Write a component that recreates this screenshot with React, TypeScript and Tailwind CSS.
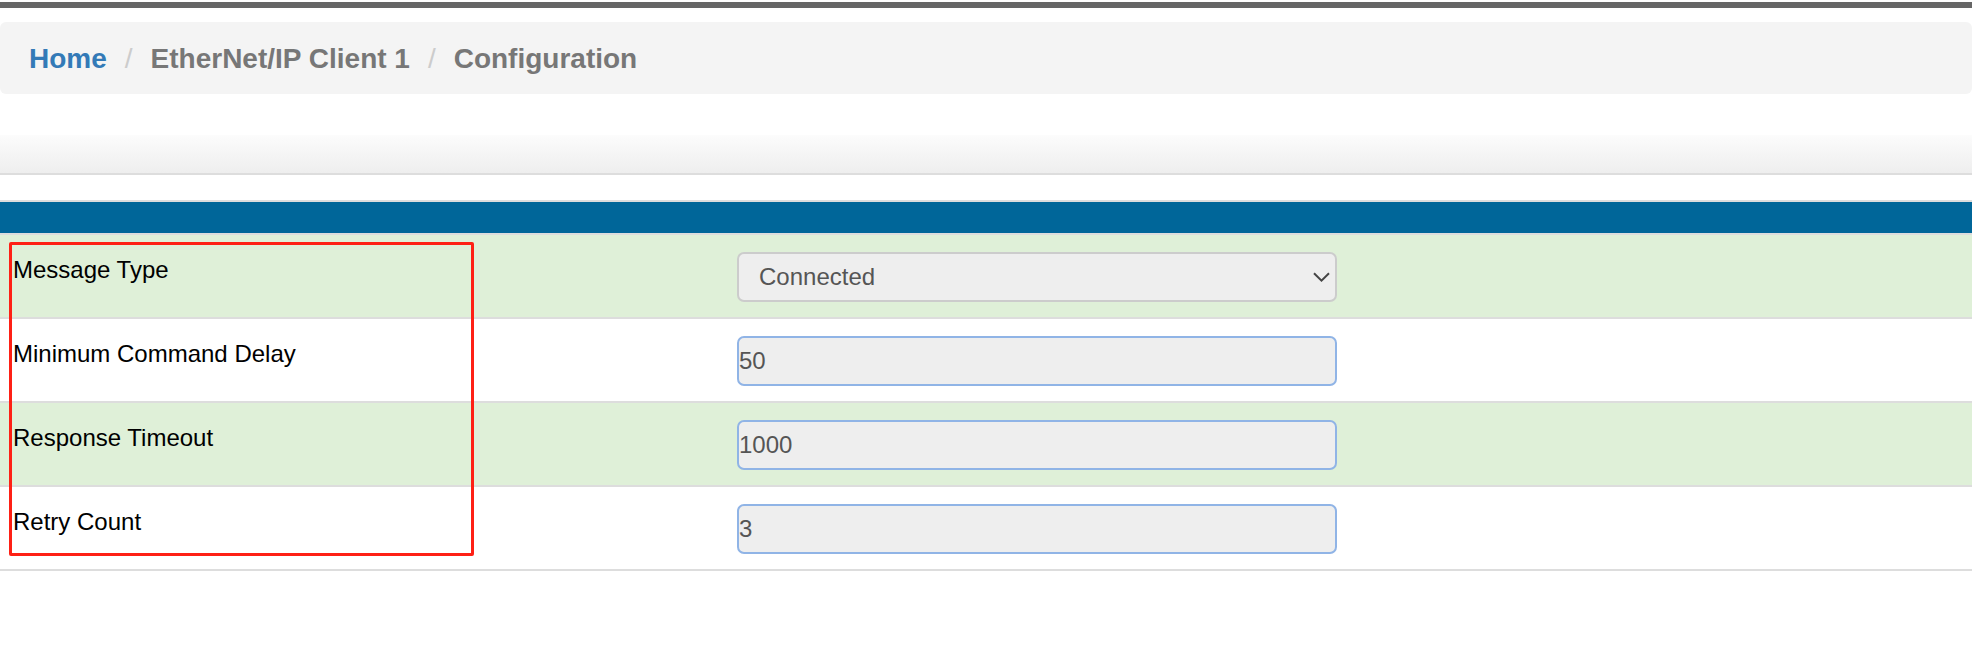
const crumbs = ["EtherNet/IP Client 1", "Configuration"];

const rows = [
  { label: "Message Type", value: "Connected", select: true },
  { label: "Minimum Command Delay", value: "50" },
  { label: "Response Timeout", value: "1000" },
  { label: "Retry Count", value: "3" },
];

function ChevronDown() {
  return (
    <svg width="17" height="10" viewBox="0 0 17 10" fill="none" className="pointer-events-none absolute right-[7px] top-[20px]">
      <path d="M1 1.2 L8.5 8.6 L16 1.2" stroke="#444444" strokeWidth="2" />
    </svg>
  );
}

export default function App() {
  return (
    <div className="relative min-h-[672px] bg-white font-['Liberation_Sans',Arial,sans-serif]">
      <div className="mt-[2px] h-[6px] bg-[#666666]" />

      <nav className="mt-[14px] h-[72px] rounded-[6px] bg-[#f4f4f4] pl-[29px] pt-[16px]">
        <ol className="flex items-baseline text-[28px] font-bold leading-normal">
          <li className="text-[#337ab7]">Home</li>
          {crumbs.map((c) => (
            <li key={c} className="flex items-baseline text-[#777777]">
              <span className="mx-[18px] font-normal text-[#cccccc]">/</span>
              {c}
            </li>
          ))}
        </ol>
      </nav>

      <div className="mt-[41px] h-[40px] border-b-2 border-[#dddddd] bg-gradient-to-b from-[#fcfcfc] to-[#eeeeee]" />

      <div className="mt-[25px] h-[35px] border-y-2 border-[#dddddd] bg-[#006699]" />

      <div>
        {rows.map((row, i) => (
          <div
            key={row.label}
            className={`flex h-[84px] border-b-2 border-[#dddddd] ${i % 2 === 0 ? "bg-[#dff0d8]" : "bg-white"}`}
          >
            <div className="w-[737px] pl-[13px] pt-[17px] text-[24px] leading-normal text-black">{row.label}</div>
            <div className="pt-[17px]">
              {row.select ? (
                <div className="relative w-[600px]">
                  <select
                    defaultValue={row.value}
                    className="h-[50px] w-[600px] appearance-none rounded-[7px] border-2 border-[#cccccc] bg-[#eeeeee] pl-[20px] text-[24px] text-[#555555] outline-none"
                  >
                    <option>Connected</option>
                    <option>Unconnected</option>
                  </select>
                  <ChevronDown />
                </div>
              ) : (
                <input
                  readOnly
                  value={row.value}
                  className="h-[50px] w-[600px] rounded-[7px] border-2 border-[#90b4e6] bg-[#eeeeee] px-0 text-[24px] text-[#555555] outline-none"
                />
              )}
            </div>
          </div>
        ))}
      </div>

      <div className="pointer-events-none absolute left-[9px] top-[240px] h-[314px] w-[465px] rounded-[2px] border-[3px] border-[#fe2015]" />
    </div>
  );
}
